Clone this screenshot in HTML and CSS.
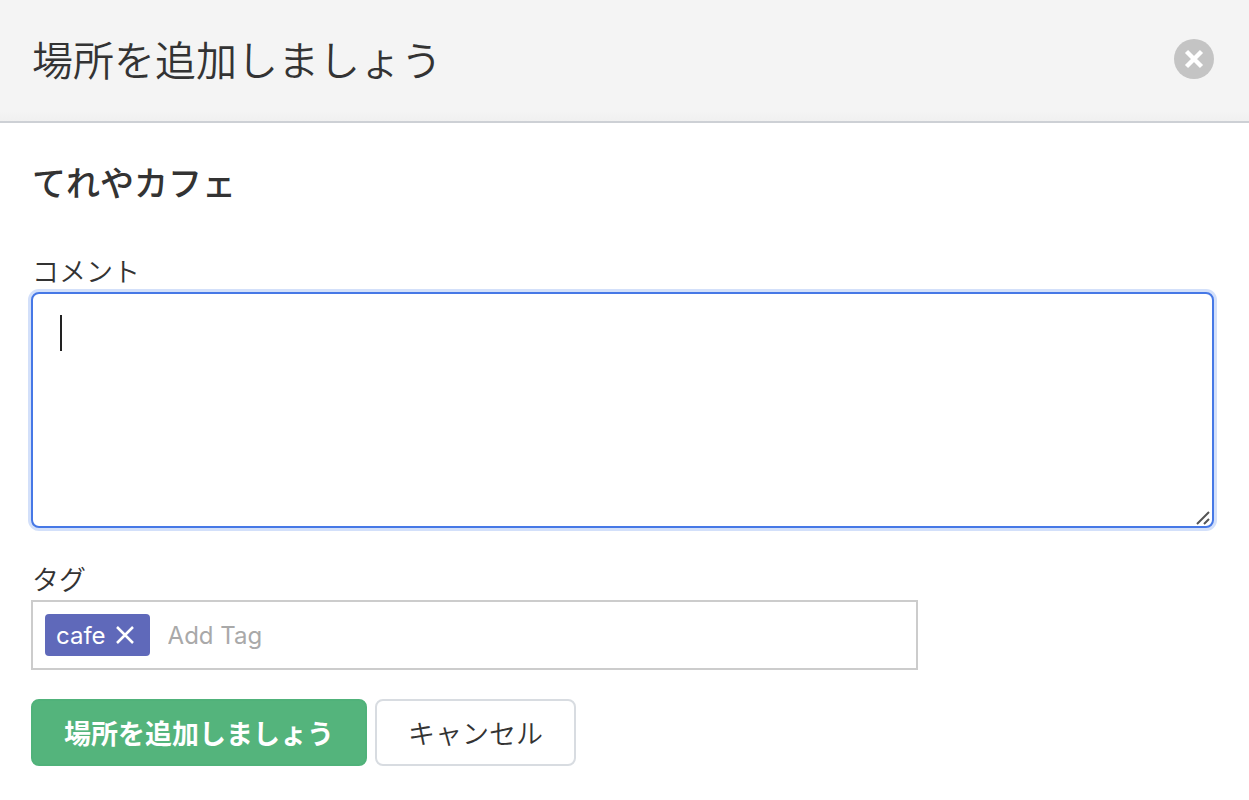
FILE: index.html
```
<!DOCTYPE html>
<html lang="ja">
    <head>
        <meta charset="utf-8">
        <title>場所を追加しましょう</title>
        <link rel="stylesheet" href="styles.css">
    </head>
    <body>
        <div class="modal">
            <header class="modal-header">
                <h1 class="modal-title">場所を追加しましょう</h1>
                <button type="button" class="close" aria-label="閉じる">
                    <svg viewBox="0 0 40 40" width="40" height="40">
                        <circle cx="20" cy="20" r="20" fill="#c4c4c4"/>
                        <path d="M12.5 12.5l15 15M27.5 12.5l-15 15" stroke="#fff" stroke-width="4.4"/>
                    </svg>
                </button>
            </header>
            <form class="modal-body">
                <h2 class="place-name">てれやカフェ</h2>

                <label class="label" for="comment">コメント</label>
                <div class="comment">
                    <textarea id="comment" class="comment-input"></textarea>
                    <span class="caret"></span>
                    <svg class="grip" viewBox="0 0 14 14" width="14" height="14">
                        <path d="M1 13L13 1M8 13l5-5" stroke="#555" stroke-width="2" fill="none"/>
                    </svg>
                </div>

                <label class="label" for="tag">タグ</label>
                <div class="tags">
                    <span class="tag">cafe
                        <button type="button" class="tag-remove" aria-label="cafeを削除">
                            <svg viewBox="0 0 18 18" width="18" height="18">
                                <path d="M1 1l16 16M17 1L1 17" stroke="#fff" stroke-width="2.5" fill="none"/>
                            </svg>
                        </button>
                    </span>
                    <input type="text" id="tag" class="tag-input" placeholder="Add Tag">
                </div>

                <div class="actions">
                    <button type="submit" class="btn btn-primary">場所を追加しましょう</button>
                    <button type="button" class="btn">キャンセル</button>
                </div>
            </form>
        </div>
    </body>
</html>
```
FILE: styles.css
```
*{
    box-sizing:border-box;
}
body,h1,h2{
    margin:0;
}
body{
    background:#fff;
    color:#333;
    font-family:Inter,"Noto Sans CJK JP",sans-serif;
    font-size:27px;
    font-weight:350;
}
button,input,textarea{
    font:inherit;
    color:inherit;
}
svg{
    display:block;
}
.modal-header{
    display:flex;
    align-items:center;
    justify-content:space-between;
    height:123px;
    padding:0 35px 0 32px;
    background:linear-gradient(#f4f4f4 92%,#f0f0f0);
    border-bottom:2px solid #cdd0d5;
}
.modal-title{
    font-size:41px;
    font-weight:350;
    line-height:60px;
}
.close,.tag-remove{
    padding:0;
    border:0;
    background:none;
    cursor:pointer;
}
.close{
    margin-bottom:3px;
}
.modal-body{
    padding:35px 35px 32px 31px;
}
.place-name{
    padding-left:1px;
    margin-bottom:44px;
    font-size:34px;
    font-weight:500;
    line-height:52px;
}
.label{
    display:block;
    padding-left:1px;
    line-height:38px;
}
.comment{
    position:relative;
    margin-bottom:34px;
}
.comment-input{
    display:block;
    width:100%;
    height:236px;
    padding:20px 28px;
    border:2px solid #4678e6;
    border-radius:8px;
    box-shadow:0 0 0 3px #d3e0fa;
    outline:0;
    caret-color:transparent;
    resize:none;
}
.caret{
    position:absolute;
    top:23px;
    left:29px;
    width:2px;
    height:36px;
    background:#222;
}
.grip{
    position:absolute;
    right:4px;
    bottom:3px;
}
.tags{
    display:flex;
    align-items:center;
    width:75%;
    min-height:69px;
    margin-bottom:29px;
    padding:12px;
    border:2px solid #ccc;
    font-size:24px;
    font-weight:400;
}
.tag{
    display:flex;
    align-items:center;
    gap:10px;
    height:42px;
    padding:0 16px 0 11px;
    border-radius:4px;
    background:#5f69ba;
    color:#fff;
}
.tag-input{
    flex:1;
    min-width:0;
    padding:0 18px;
    border:0;
    outline:0;
    background:none;
}
.tag-input::placeholder{
    color:#a9a9a9;
    opacity:1;
}
.actions{
    display:flex;
    gap:8px;
}
.btn{
    height:67px;
    padding:0 31px;
    border:2px solid #d8dce1;
    border-radius:8px;
    background:#fff;
    cursor:pointer;
}
.btn-primary{
    border-color:#50b27a;
    background:#54b47c;
    color:#fff;
    font-weight:700;
}
```
